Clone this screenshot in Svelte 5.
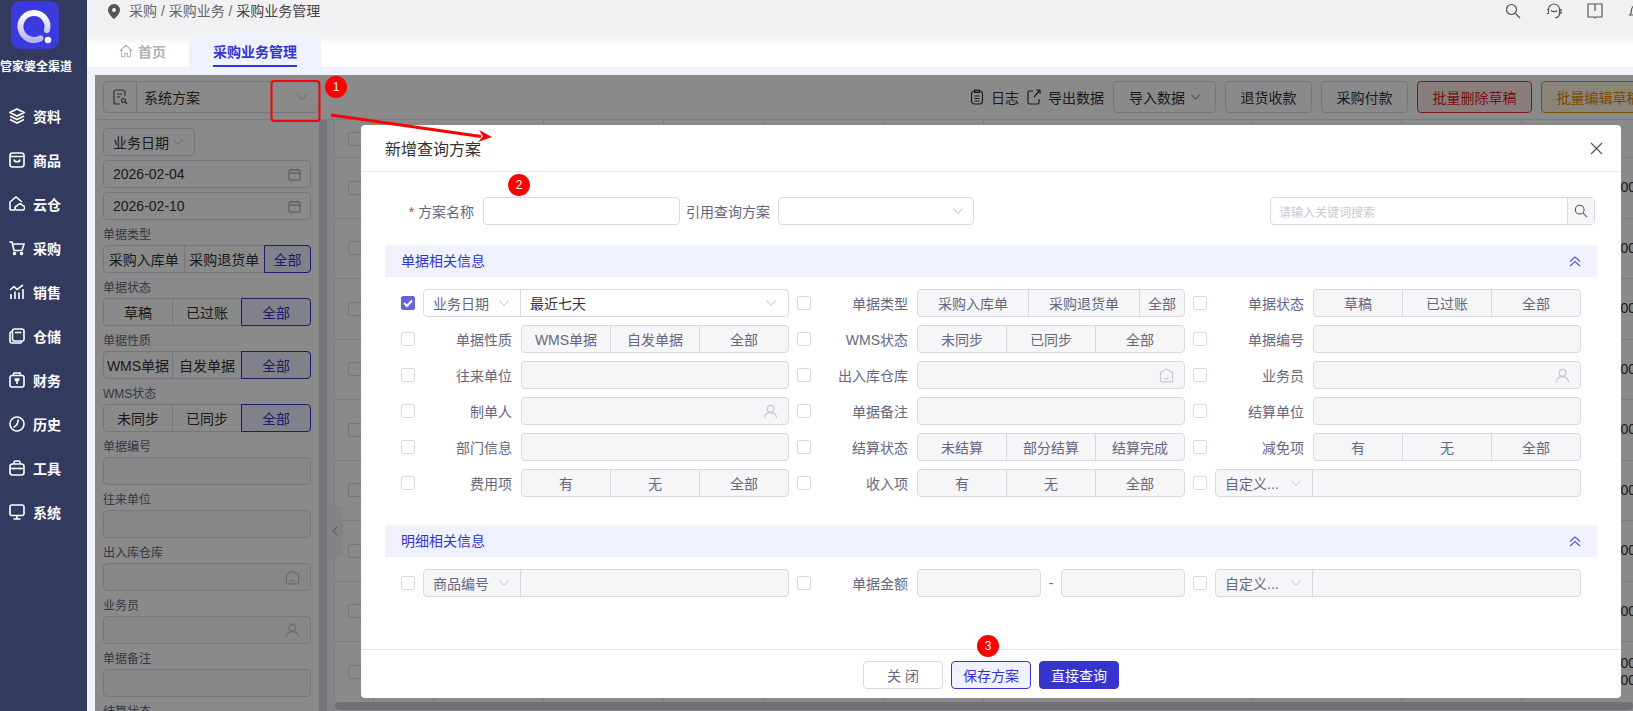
<script>
  const menu = ['资料', '商品', '云仓', '采购', '销售', '仓储', '财务', '历史', '工具', '系统']

  const filters = [
    { label: '单据类型', opts: ['采购入库单', '采购退货单', '全部'], type: true },
    { label: '单据状态', opts: ['草稿', '已过账', '全部'] },
    { label: '单据性质', opts: ['WMS单据', '自发单据', '全部'] },
    { label: 'WMS状态', opts: ['未同步', '已同步', '全部'] },
    { label: '单据编号' },
    { label: '往来单位' },
    { label: '出入库仓库', icon: 'house' },
    { label: '业务员', icon: 'user' },
    { label: '单据备注' },
    { label: '结算状态' },
  ]

  const fields = [
    { sel: '业务日期', value: '最近七天', checked: true },
    { label: '单据类型', opts: ['采购入库单', '采购退货单', '全部'], type: true },
    { label: '单据状态', opts: ['草稿', '已过账', '全部'] },
    { label: '单据性质', opts: ['WMS单据', '自发单据', '全部'] },
    { label: 'WMS状态', opts: ['未同步', '已同步', '全部'] },
    { label: '单据编号' },
    { label: '往来单位' },
    { label: '出入库仓库', icon: 'house' },
    { label: '业务员', icon: 'user' },
    { label: '制单人', icon: 'user' },
    { label: '单据备注' },
    { label: '结算单位' },
    { label: '部门信息' },
    { label: '结算状态', opts: ['未结算', '部分结算', '结算完成'] },
    { label: '减免项', opts: ['有', '无', '全部'] },
    { label: '费用项', opts: ['有', '无', '全部'] },
    { label: '收入项', opts: ['有', '无', '全部'] },
    { sel: '自定义...' },
  ]

  const columns = 11
  const rows = 9
</script>

{#snippet chevron()}
  <svg class="chev" viewBox="0 0 10 6"><path d="M.5.5 5 5.500 9.500.5" /></svg>
{/snippet}

{#snippet fieldIcon(name)}
  {#if name === 'user'}
    <svg class="ficon" viewBox="0 0 16 16"><circle cx="8" cy="5" r="3.600" /><path d="M1.500 15c.5-4 3-5.800 6.500-5.800s6 1.800 6.500 5.800" /></svg>
  {:else if name === 'house'}
    <svg class="ficon" viewBox="0 0 16 16"><path d="M8 1.200 14.500 5v8.200a1.600 1.600 0 0 1-1.600 1.600H3.100a1.600 1.600 0 0 1-1.600-1.600V5z" /><path d="M5.500 11.500h5" /></svg>
  {/if}
{/snippet}

{#snippet dbl()}
  <svg class="dbl" viewBox="0 0 12 11"><path d="M1 5.500 6 1l5 4.500M1 10l5-4.500L11 10" /></svg>
{/snippet}

<div class="app">
  <aside class="side">
    <div class="logo">
      <svg viewBox="0 0 48 48">
        <defs>
          <linearGradient id="ring" x1="0" y1="0" x2="0" y2="1">
            <stop offset="0" stop-color="#fff" />
            <stop offset="1" stop-color="#b9b4f2" />
          </linearGradient>
        </defs>
        <rect width="48" height="48" rx="9" fill="#3b3bdc" />
        <path d="M36 29A13.500 13.500 0 1 0 29.500 37.300" fill="none" stroke="url(#ring)" stroke-width="6" stroke-linecap="round" />
        <circle cx="37" cy="39" r="3.200" fill="#fff" />
      </svg>
    </div>
    <div class="brand">管家婆全渠道</div>
    <nav>
      {#each menu as item, i}
        <div class="nav-item">
          <svg class="nav-icon" viewBox="0 0 16 16">
            {#if i === 0}
              <path d="M8 1 15 4.500 8 8 1 4.500zM1 8l7 3.500L15 8M1 11.500 8 15l7-3.500" />
            {:else if i === 1}
              <rect x="1" y="1" width="14" height="14" rx="2.500" /><path d="M1 4.500h14M5 7.500c.5 3 5.500 3 6 0" />
            {:else if i === 2}
              <path d="M1 14V6l6-5 6 5M1 14h5" /><path d="M8 14a2 2 0 0 1 0-4 3 3 0 0 1 5.500-.5A2.300 2.300 0 0 1 14 14z" />
            {:else if i === 3}
              <path d="M.5 2h2.500l2 8.500h8l2-6.500H3.500" /><circle cx="5.500" cy="13.500" r="1" /><circle cx="12.500" cy="13.500" r="1" />
            {:else if i === 4}
              <path d="M1 6l4-3.500 3 3L14 1M2 15v-5M6 15V7.500M10 15V8.500M14 15V5" />
            {:else if i === 5}
              <rect x="3.500" y="1" width="11.500" height="12" rx="2" /><path d="M3.500 3.500A2 2 0 0 0 1 5.500V13a2 2 0 0 0 2 2h8a2 2 0 0 0 2-1.500M6 4.500h6.500" />
            {:else if i === 6}
              <path d="M3 3.500h10a2 2 0 0 1 2 2V13a2 2 0 0 1-2 2H3a2 2 0 0 1-2-2V5.500a2 2 0 0 1 2-2zM4 3.500 5 1h6l1 2.500M5.500 7h5M8 7v5M6 9l2-2 2 2" />
            {:else if i === 7}
              <circle cx="8" cy="8" r="7" /><path d="M9.500 3.500 8 8.500l-3.500 3" />
            {:else if i === 8}
              <rect x="1" y="4" width="14" height="11" rx="2.500" /><path d="M5 4V2.500A1.500 1.500 0 0 1 6.500 1h3A1.500 1.500 0 0 1 11 2.500V4M1 8.500h14M5 7.500v2M11 7.500v2" />
            {:else}
              <rect x="1" y="1" width="14" height="10.500" rx="2" /><path d="M8 11.500V15M4.500 15h7" />
            {/if}
          </svg>
          <span>{item}</span>
        </div>
      {/each}
    </nav>
  </aside>

  <div class="main">
    <header class="topbar">
      <svg class="pin" viewBox="0 0 12 15"><path fill-rule="evenodd" d="M6 0a6 6 0 0 1 6 6c0 3.500-3.500 7-6 9-2.500-2-6-5.500-6-9a6 6 0 0 1 6-6zm0 4a2 2 0 1 0 0 4 2 2 0 0 0 0-4z" /></svg>
      <span class="crumb">采购 / 采购业务 / <b>采购业务管理</b></span>
      <div class="top-icons">
        <svg viewBox="0 0 16 16"><circle cx="6.500" cy="6.500" r="5" /><path d="m10.500 10.500 4.500 4.500" /></svg>
        <svg viewBox="0 0 16 16"><path d="M2.500 10.500V6.500a5.500 5.500 0 0 1 11 0v4c0 2.500-1.500 4-4.500 4.500M1 6.500h1.500v4H1M13.500 6.500H15v4h-1.500M5 7.500c1.500 1.500 4.500 1.500 6 0" /></svg>
        <svg viewBox="0 0 16 16"><path d="M1 1h14v13H9l-1 1-1-1H1zM8 1v7" /></svg>
        <svg viewBox="0 0 16 16"><path d="M2 12c1-1 1.500-2 1.500-5a4.500 4.500 0 0 1 9 0c0 3 .5 4 1.500 5zM6.500 14.500h3" /></svg>
      </div>
    </header>

    <div class="tabs">
      <div class="tab home">
        <svg viewBox="0 0 16 16"><path d="M1 8 8 1.500 15 8M3 6.500V14.500h3.500v-4h3v4H13V6.500" /></svg>
        <span>首页</span>
      </div>
      <div class="tab active"><span>采购业务管理</span></div>
    </div>

    <div class="band">
      <section class="content">
        <div class="head">
          <div class="plan">
            <span class="plan-icon">
              <svg viewBox="0 0 16 16"><path d="M13 7V3a2 2 0 0 0-2-2H4a2 2 0 0 0-2 2v10a2 2 0 0 0 2 2h4M5 5h5M5 8h3" /><circle cx="11.500" cy="11.500" r="2" /><path d="m13 13 2 2" /></svg>
            </span>
            <span class="plan-text">系统方案</span>
            {@render chevron()}
          </div>
          <div class="tools">
            <span class="link">
              <svg viewBox="0 0 14 16"><rect x="1.500" y="2" width="11" height="13" rx="3" /><path d="M4.500 1h5v2.500h-5zM4.500 7h5M4.500 9.500h5M4.500 12h5" /></svg>
              日志
            </span>
            <span class="link export">
              <svg viewBox="0 0 14 16"><path d="M6 2H2.500A1.500 1.500 0 0 0 1 3.500v10A1.500 1.500 0 0 0 2.500 15h8a1.500 1.500 0 0 0 1.500-1.500V10M7 8l6-7M9 1h4v4" /></svg>
              导出数据
            </span>
            <button class="tool import">导入数据 {@render chevron()}</button>
            <button class="tool">退货收款</button>
            <button class="tool">采购付款</button>
            <button class="tool danger">批量删除草稿</button>
            <button class="tool warn">批量编辑草稿</button>
          </div>
        </div>

        <div class="body">
          <div class="filter">
            <div class="pick">业务日期 {@render chevron()}</div>
            <div class="date">2026-02-04
              <svg viewBox="0 0 14 14"><rect x="1" y="2" width="12" height="11" rx="1" /><path d="M1 5.500h12M4 .5v2M10 .5v2" /></svg>
            </div>
            <div class="date">2026-02-10
              <svg viewBox="0 0 14 14"><rect x="1" y="2" width="12" height="11" rx="1" /><path d="M1 5.500h12M4 .5v2M10 .5v2" /></svg>
            </div>
            {#each filters as f}
              <div class="f-label">{f.label}</div>
              {#if f.opts}
                <div class="seg" class:type={f.type}>
                  {#each f.opts as o, i}
                    <span class:on={i === 2}>{o}</span>
                  {/each}
                </div>
              {:else}
                <div class="f-input">{@render fieldIcon(f.icon)}</div>
              {/if}
            {/each}
          </div>
          <div class="vbar"></div>
          <div class="gutter"></div>
          <div class="handle"><svg viewBox="0 0 6 10"><path d="M5 1 1 5l4 4" /></svg></div>

          <div class="table">
            <div class="rows">
              {#each Array(rows + 1) as _, r}
                <div class="row" class:th={r === 0}>
                  {#each Array(columns) as _, c}
                    <div class="cell">
                      {#if c === 0}<i class="tick"></i>{/if}
                      {#if c === columns - 1 && r > 0}
                        <span class="num">0.00{#if r === rows}<br />0.00{/if}</span>
                      {/if}
                    </div>
                  {/each}
                </div>
              {/each}
            </div>
            <div class="hbar"></div>
          </div>
        </div>

        <div class="mask"></div>

        <div class="modal">
          <div class="m-head">
            <h3>新增查询方案</h3>
            <svg viewBox="0 0 13 13"><path d="m1 1 11 11M12 1 1 12" /></svg>
          </div>
          <div class="m-body">
            <div class="plan-row">
              <span class="name"><em>*</em> 方案名称</span>
              <div class="ctl plain name-input"></div>
              <span class="ref">引用查询方案</span>
              <div class="ctl plain ref-input">{@render chevron()}</div>
              <div class="search">
                <span>请输入关键词搜索</span>
                <b><svg viewBox="0 0 16 16"><circle cx="6.500" cy="6.500" r="5" /><path d="m10.500 10.500 4.500 4.500" /></svg></b>
              </div>
            </div>

            <div class="sec"><span>单据相关信息</span>{@render dbl()}</div>
            <div class="grid">
              {#each fields as f}
                <div class="item">
                  <i class="box" class:checked={f.checked}>
                    {#if f.checked}<svg viewBox="0 0 14 14"><path d="m3 7 3 3 5-5.500" /></svg>{/if}
                  </i>
                  {#if f.sel}
                    <div class="ctl combo" class:plain={f.checked}>
                      <span class="combo-sel">{f.sel} {@render chevron()}</span>
                      <span class="combo-val">{f.value ?? ''}{#if f.value}{@render chevron()}{/if}</span>
                    </div>
                  {:else}
                    <span class="lab">{f.label}</span>
                    {#if f.opts}
                      <div class="ctl opts" class:type={f.type}>
                        {#each f.opts as o}<span>{o}</span>{/each}
                      </div>
                    {:else}
                      <div class="ctl">{@render fieldIcon(f.icon)}</div>
                    {/if}
                  {/if}
                </div>
              {/each}
            </div>

            <div class="sec second"><span>明细相关信息</span>{@render dbl()}</div>
            <div class="grid">
              <div class="item">
                <i class="box"></i>
                <div class="ctl combo">
                  <span class="combo-sel">商品编号 {@render chevron()}</span>
                  <span class="combo-val"></span>
                </div>
              </div>
              <div class="item">
                <i class="box"></i>
                <span class="lab">单据金额</span>
                <div class="range">
                  <div class="ctl"></div>
                  <span>-</span>
                  <div class="ctl"></div>
                </div>
              </div>
              <div class="item">
                <i class="box"></i>
                <div class="ctl combo">
                  <span class="combo-sel">自定义... {@render chevron()}</span>
                  <span class="combo-val"></span>
                </div>
              </div>
            </div>
          </div>
          <div class="m-foot">
            <button class="btn">关 闭</button>
            <button class="btn save">保存方案</button>
            <button class="btn primary">直接查询</button>
          </div>
        </div>
      </section>
    </div>
  </div>

  <svg class="marks" viewBox="0 0 1633 711">
    <rect x="271.500" y="81" width="48" height="40" rx="3" />
    <path d="M331 115 481 136.500" />
    <polygon points="492,137 479,130 483,136.500 478,142" />
  </svg>
  <span class="dot one">1</span>
  <span class="dot two">2</span>
  <span class="dot three">3</span>
</div>

<style>
  :global(body) {
    margin: 0;
    font-family: "Liberation Sans", "Noto Sans CJK SC", sans-serif;
    font-size: 14px;
    color: #333;
  }

  .app {
    position: relative;
    display: flex;
    height: 100vh;
    overflow: hidden;
    background: #fff;
  }

  svg {
    fill: none;
    stroke: currentColor;
    stroke-width: 1.2;
    flex: none;
  }

  .side {
    flex: none;
    width: 87px;
    background: #333a5f;
    color: #fff;
  }

  .logo {
    width: 48px;
    height: 48px;
    margin: 1px 0 0 11px;
  }

  .logo svg {
    display: block;
    width: 48px;
    height: 48px;
    stroke: none;
  }

  .brand {
    margin-top: 9px;
    font-size: 12px;
    line-height: 18px;
    font-weight: 700;
    white-space: nowrap;
  }

  nav {
    margin-top: 18px;
  }

  .nav-item {
    display: flex;
    align-items: center;
    gap: 8px;
    height: 44px;
    padding-left: 9px;
    font-weight: 700;
  }

  .nav-icon {
    width: 16px;
    height: 16px;
    stroke-width: 1.6;
  }

  .main {
    flex: 1;
    min-width: 0;
    display: flex;
    flex-direction: column;
  }

  .topbar {
    flex: none;
    display: flex;
    height: 35px;
    padding-left: 21px;
    background: #f1f1f4;
    color: #666;
  }

  .pin {
    width: 12px;
    height: 15px;
    margin: 4px 9px 0 0;
    fill: #555;
    stroke: none;
  }

  .crumb {
    line-height: 22px;
  }

  .crumb b {
    font-weight: 400;
    color: #444;
  }

  .top-icons {
    display: flex;
    gap: 25px;
    margin-left: auto;
    margin-right: -11px;
    padding-top: 3px;
    color: #555;
  }

  .top-icons svg {
    width: 16px;
    height: 16px;
  }

  .tabs {
    flex: none;
    display: flex;
    height: 32px;
    padding-left: 8px;
    background: linear-gradient(#f1f1f4, #fff 10px);
  }

  .tab {
    display: flex;
    align-items: center;
    padding: 0 24px;
    font-weight: 700;
  }

  .home {
    gap: 5px;
    color: #b0b0b8;
  }

  .home svg {
    width: 14px;
    height: 14px;
  }

  .active {
    margin-left: -1px;
    background: #eff1fd;
    border-radius: 8px 8px 0 0;
    color: #3535cc;
  }

  .active span {
    padding-top: 5px;
    line-height: 25px;
    border-bottom: 2px solid #3535cc;
  }

  .band {
    flex: 1;
    min-height: 0;
    padding: 8px 0 0 8px;
    background: #eff1fd;
  }

  .content {
    position: relative;
    display: flex;
    flex-direction: column;
    height: 100%;
    overflow: hidden;
    background: #fff;
  }

  .head {
    flex: none;
    display: flex;
    box-sizing: border-box;
    height: 45px;
    padding: 6px 0 0 8px;
    border-bottom: 1px solid #e4e5ec;
  }

  .plan {
    flex: none;
    box-sizing: border-box;
    display: flex;
    align-items: center;
    width: 216px;
    height: 32px;
    border: 1px solid #d8d8e4;
    border-radius: 4px;
  }

  .plan-icon {
    display: flex;
    align-items: center;
    justify-content: center;
    width: 32px;
    height: 100%;
    border-right: 1px solid #d8d8e4;
    color: #555;
  }

  .plan-icon svg {
    width: 16px;
    height: 16px;
  }

  .plan-text {
    flex: 1;
    padding-left: 7px;
  }

  .plan .chev {
    margin-right: 11px;
  }

  .chev {
    width: 10px;
    height: 6px;
    stroke-width: 1;
    color: #bcbcc8;
  }

  .tools {
    flex: none;
    display: flex;
    align-items: center;
    gap: 9px;
    height: 32px;
    margin-left: 651px;
  }

  .link {
    display: flex;
    align-items: center;
    gap: 7px;
  }

  .link svg {
    width: 14px;
    height: 16px;
  }

  .export {
    margin-left: -1px;
  }

  .tool {
    height: 32px;
    padding: 0 14.500px;
    background: #fff;
    border: 1px solid #d8d8e4;
    border-radius: 4px;
    font: inherit;
    color: #333;
    white-space: nowrap;
  }

  .import {
    display: flex;
    align-items: center;
    gap: 6px;
    padding: 0 15px;
  }

  .import .chev {
    width: 9px;
    color: #555;
  }

  .danger {
    background: #ffe8e8;
    border-color: #f03030;
    color: #e02020;
  }

  .warn {
    background: #fff4e0;
    border-color: #f09000;
    color: #e88a00;
  }

  .body {
    position: relative;
    flex: 1;
    min-height: 0;
    display: flex;
  }

  .filter {
    flex: none;
    box-sizing: border-box;
    width: 224px;
    padding: 8px 8px 0;
    overflow: hidden;
  }

  .pick {
    box-sizing: border-box;
    display: flex;
    align-items: center;
    gap: 4px;
    width: 92px;
    height: 28px;
    padding-left: 9px;
    border: 1px solid #d8d8e4;
    border-radius: 4px;
  }

  .date {
    box-sizing: border-box;
    display: flex;
    align-items: center;
    justify-content: space-between;
    height: 28px;
    margin-top: 4px;
    padding: 0 9px;
    border: 1px solid #d8d8e4;
    border-radius: 4px;
  }

  .date svg {
    width: 13px;
    height: 13px;
    color: #aaa;
  }

  .f-label {
    margin-top: 6px;
    margin-bottom: 1px;
    font-size: 12px;
    line-height: 18px;
    color: #666680;
    white-space: nowrap;
  }

  .f-input {
    box-sizing: border-box;
    display: flex;
    align-items: center;
    justify-content: flex-end;
    height: 28px;
    padding-right: 10px;
    background: #fafafc;
    border: 1px solid #d8d8e4;
    border-radius: 4px;
  }

  .seg,
  .opts {
    display: flex;
  }

  .seg {
    box-sizing: border-box;
    height: 28px;
    border: 1px solid #d8d8e4;
    border-radius: 4px;
  }

  .seg span,
  .opts span {
    flex: 1 1 0;
    min-width: 0;
    display: flex;
    align-items: center;
    justify-content: center;
    border-left: 1px solid #d8d8e4;
    white-space: nowrap;
  }

  .seg span:first-child,
  .opts span:first-child {
    border-left: 0;
  }

  .seg.type span:last-child {
    flex: 0 0 45px;
  }

  .opts.type span:last-child {
    flex: 0 0 44px;
  }

  .seg .on {
    margin: -1px -1px -1px 0;
    background: #eff1fd;
    border: 1px solid #3535cc;
    border-radius: 0 4px 4px 0;
    color: #3535cc;
  }

  .ficon {
    width: 15px;
    height: 15px;
    color: #c6c6cf;
  }

  .vbar {
    flex: none;
    width: 8px;
    background: #d5d9e2;
  }

  .gutter {
    flex: none;
    width: 8px;
    background: #f3f4f8;
    border-right: 1px solid #e4e5ec;
    box-sizing: border-box;
  }

  .handle {
    position: absolute;
    left: 232px;
    top: 382px;
    display: flex;
    align-items: center;
    justify-content: center;
    width: 16px;
    height: 58px;
    background: #f3f3f5;
    clip-path: polygon(0 0, 100% 10%, 100% 90%, 0 100%);
    color: #aaa;
  }

  .handle svg {
    width: 6px;
    height: 10px;
  }

  .table {
    flex: 1;
    min-width: 0;
    display: flex;
    flex-direction: column;
    overflow: hidden;
  }

  .rows {
    flex: 1;
    min-height: 0;
    overflow: hidden;
  }

  .row {
    display: grid;
    grid-template-columns: 39px 60px 110px 120px 100px 120px 100px 268px 150px 120px 118px;
    box-sizing: border-box;
    width: 1305px;
    height: 60.500px;
    border-bottom: 1px solid #e4e5ec;
  }

  .row.th {
    height: 38px;
  }

  .cell {
    box-sizing: border-box;
    display: flex;
    align-items: center;
    justify-content: flex-end;
    border-right: 1px solid #e4e5ec;
    line-height: 17px;
  }

  .cell:first-child {
    justify-content: flex-start;
    padding-left: 13px;
  }

  .cell:last-child {
    padding-right: 4px;
    border-right: 0;
  }

  .num {
    text-align: right;
  }

  .tick {
    width: 14px;
    height: 14px;
    box-sizing: border-box;
    background: #fff;
    border: 1px solid #d8d8e4;
    border-radius: 2px;
  }

  .hbar {
    flex: none;
    height: 8px;
    margin-bottom: 1px;
    background: #ccd0d5;
    border-radius: 4px;
  }

  .mask {
    position: absolute;
    inset: 0;
    background: rgba(0, 0, 0, 0.46);
  }

  .modal {
    position: absolute;
    left: 266px;
    top: 50px;
    display: flex;
    flex-direction: column;
    width: 1260px;
    height: 573px;
    background: #fff;
    border-radius: 4px;
  }

  .m-head {
    flex: none;
    box-sizing: border-box;
    display: flex;
    align-items: center;
    justify-content: space-between;
    height: 47px;
    padding: 0 18px 0 24px;
    border-bottom: 1px solid #ececf2;
  }

  .m-head h3 {
    margin: 0;
    font-size: 16px;
    font-weight: 400;
    color: #333;
  }

  .m-head svg {
    width: 13px;
    height: 13px;
    color: #555;
  }

  .m-body {
    flex: 1;
    min-height: 0;
    padding: 25px 24px 0;
    color: #666680;
  }

  .plan-row {
    display: flex;
    align-items: center;
    height: 28px;
    margin-bottom: 20px;
  }

  .name {
    flex: none;
    width: 89px;
    margin-right: 9px;
    white-space: nowrap;
    text-align: right;
  }

  .name em {
    color: #f03030;
    font-style: normal;
  }

  .ref {
    margin: 0 8px 0 6px;
    white-space: nowrap;
  }

  .plan-row .name-input {
    flex: none;
    width: 197px;
  }

  .plan-row .ref-input {
    flex: none;
    width: 196px;
    padding-right: 10px;
  }

  .search {
    flex: none;
    box-sizing: border-box;
    display: flex;
    align-items: center;
    justify-content: space-between;
    width: 325px;
    height: 28px;
    margin: 0 2px 0 auto;
    padding-left: 8px;
    border: 1px solid #d8d8e4;
    border-radius: 4px;
    font-size: 12px;
    color: #c9c9d4;
  }

  .search b {
    display: flex;
    align-items: center;
    justify-content: center;
    width: 26px;
    height: 100%;
    background: #f6f6f9;
    border-left: 1px solid #d8d8e4;
    color: #555;
  }

  .search svg {
    width: 14px;
    height: 14px;
  }

  .sec {
    box-sizing: border-box;
    display: flex;
    align-items: center;
    justify-content: space-between;
    height: 32px;
    margin-bottom: 12px;
    padding: 0 16px;
    background: #eff1fd;
    color: #3535cc;
  }

  .sec span {
    margin-top: -2px;
  }

  .sec.second {
    margin-top: 28px;
  }

  .dbl {
    width: 12px;
    height: 11px;
    color: #5a5ae0;
  }

  .grid {
    display: grid;
    grid-template-columns: repeat(3, 388px);
    gap: 8px;
    padding-left: 16px;
  }

  .item {
    display: flex;
    align-items: center;
    height: 28px;
  }

  .box {
    flex: none;
    box-sizing: border-box;
    width: 14px;
    height: 14px;
    margin-right: 8px;
    background: #fff;
    border: 1px solid #d8d8e4;
    border-radius: 2px;
  }

  .box.checked {
    background: #6464dc;
    border-color: #6464dc;
    color: #fff;
  }

  .box svg {
    display: block;
    width: 14px;
    height: 14px;
    margin: -1px;
    stroke-width: 2;
  }

  .lab {
    flex: none;
    width: 89px;
    margin-right: 9px;
    text-align: right;
    white-space: nowrap;
  }

  .ctl {
    flex: 1;
    min-width: 0;
    box-sizing: border-box;
    display: flex;
    align-items: center;
    justify-content: flex-end;
    height: 28px;
    padding-right: 10px;
    background: #f6f6f9;
    border: 1px solid #d8d8e4;
    border-radius: 4px;
  }

  .ctl.plain {
    background: #fff;
  }

  .ctl.opts,
  .ctl.combo {
    justify-content: flex-start;
    align-items: stretch;
    padding-right: 0;
  }

  .combo-sel {
    flex: none;
    box-sizing: border-box;
    display: flex;
    align-items: center;
    justify-content: space-between;
    width: 97px;
    padding: 0 11px 0 9px;
    border-right: 1px solid #d8d8e4;
    white-space: nowrap;
  }

  .combo-val {
    flex: 1;
    display: flex;
    align-items: center;
    justify-content: space-between;
    padding: 0 12px 0 9px;
    color: #333;
  }

  .range {
    flex: 1;
    min-width: 0;
    display: flex;
    align-items: center;
    gap: 8px;
  }

  .m-foot {
    flex: none;
    box-sizing: border-box;
    display: flex;
    justify-content: center;
    gap: 8px;
    height: 49px;
    padding-top: 11px;
    border-top: 1px solid #e6e6ec;
  }

  .btn {
    width: 80px;
    height: 28px;
    padding: 0;
    background: #fff;
    border: 1px solid #d8d8e4;
    border-radius: 4px;
    font: inherit;
    color: #666680;
  }

  .save {
    background: #eff1fd;
    border-color: #3535cc;
    color: #3535cc;
  }

  .primary {
    background: #3535cc;
    border-color: #3535cc;
    color: #fff;
  }

  .marks {
    position: absolute;
    inset: 0;
    width: 1633px;
    height: 711px;
    pointer-events: none;
  }

  .marks rect {
    stroke: #f00;
    stroke-width: 2;
  }

  .marks path {
    stroke: #f00;
    stroke-width: 3;
  }

  .marks polygon {
    fill: #f00;
    stroke: none;
  }

  .dot {
    position: absolute;
    display: flex;
    align-items: center;
    justify-content: center;
    width: 22px;
    height: 22px;
    background: #f00;
    border-radius: 50%;
    color: #fff;
    font-size: 12px;
  }

  .one {
    left: 325px;
    top: 76px;
  }

  .two {
    left: 508px;
    top: 174px;
  }

  .three {
    left: 977px;
    top: 635px;
  }
</style>
